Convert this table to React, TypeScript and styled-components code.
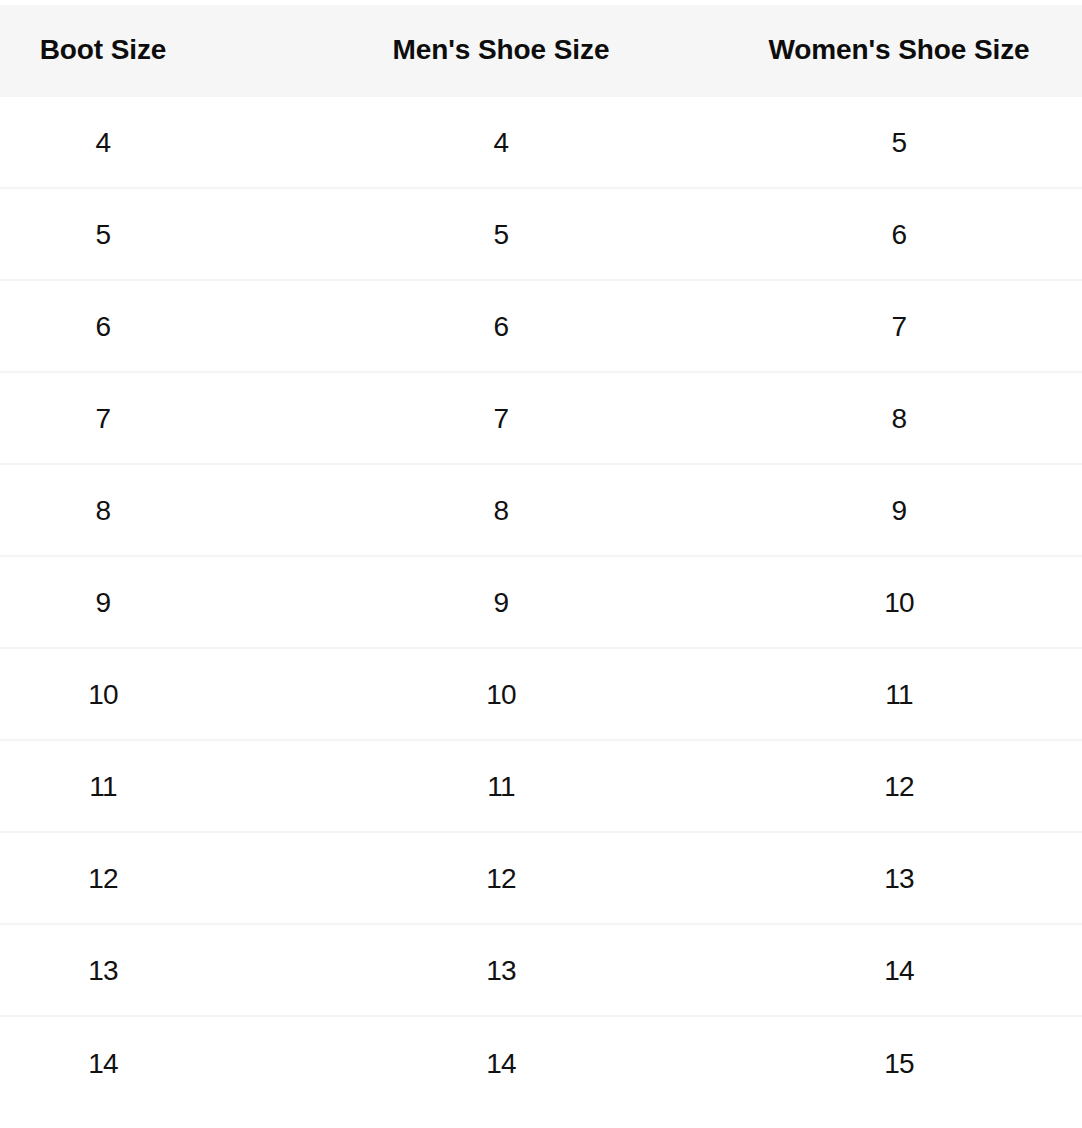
import styled, { createGlobalStyle } from 'styled-components';

const GlobalStyle = createGlobalStyle`
  html, body {
    margin: 0;
    padding: 0;
    background: #ffffff;
  }
  body {
    font-family: "Liberation Sans", Arial, sans-serif;
    color: #111111;
  }
`;

const Page = styled.div`
  padding-top: 5px;
`;

const Table = styled.div`
  display: flex;
  flex-direction: column;
  width: 1082px;
`;

const Row = styled.div<{ $head?: boolean }>`
  display: grid;
  grid-template-columns: 206px 590px 206px;
  align-items: center;
  height: 92px;
  box-sizing: border-box;
  background: ${props => props.$head ? '#f6f6f6' : '#ffffff'};
  border-bottom: ${props => props.$head ? 'none' : '2px solid #f4f4f4'};

  &:last-child {
    border-bottom: none;
  }
`;

const HeadCell = styled.div`
  display: flex;
  justify-content: center;
  font-size: 28px;
  font-weight: 700;
  letter-spacing: -0.1px;
  white-space: nowrap;
  color: #0d0d0d;
  padding-bottom: 2px;
`;

const Cell = styled.div`
  display: flex;
  justify-content: center;
  font-size: 28px;
  font-weight: 400;
  letter-spacing: -0.8px;
  color: #111111;
  padding-top: 1px;
`;

const sizes: [number, number, number][] = [
  [4, 4, 5],
  [5, 5, 6],
  [6, 6, 7],
  [7, 7, 8],
  [8, 8, 9],
  [9, 9, 10],
  [10, 10, 11],
  [11, 11, 12],
  [12, 12, 13],
  [13, 13, 14],
  [14, 14, 15],
];

const App = () => (
  <>
    <GlobalStyle />
    <Page>
      <Table>
        <Row $head>
          <HeadCell>Boot Size</HeadCell>
          <HeadCell>Men's Shoe Size</HeadCell>
          <HeadCell>Women's Shoe Size</HeadCell>
        </Row>
        {sizes.map(([boot, men, women]) => (
          <Row key={boot}>
            <Cell>{boot}</Cell>
            <Cell>{men}</Cell>
            <Cell>{women}</Cell>
          </Row>
        ))}
      </Table>
    </Page>
  </>
);

export default App;
